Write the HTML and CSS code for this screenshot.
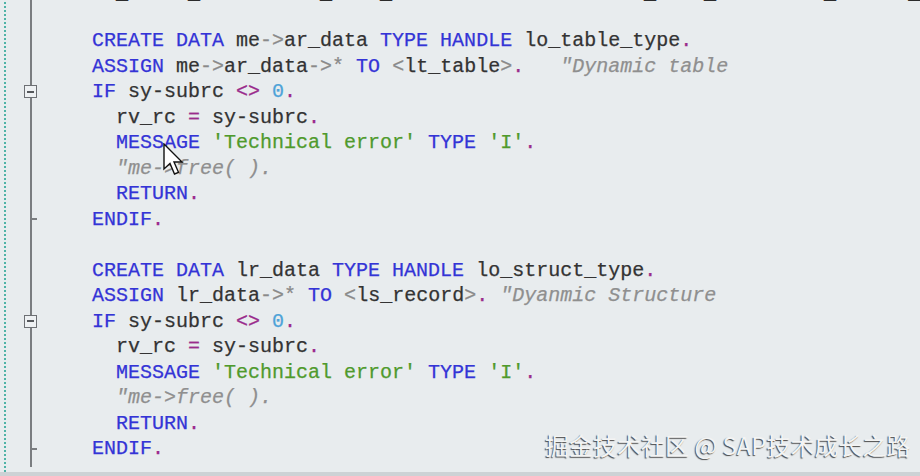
FILE: index.html
```html
<!DOCTYPE html>
<html lang="en">
<head>
<meta charset="utf-8">
<title>ABAP editor</title>
<link rel="stylesheet" href="styles.css">
</head>
<body>
<div class="editor">
  <div class="linenums"></div>
  <div class="folds">
    <div class="frow"></div>
    <div class="frow"></div>
    <div class="frow"></div>
    <div class="frow"></div>
    <div class="frow"><span class="fold-box"><span class="minus"></span></span></div>
    <div class="frow"></div>
    <div class="frow"></div>
    <div class="frow"></div>
    <div class="frow"></div>
    <div class="frow"><span class="tick"></span></div>
    <div class="frow"></div>
    <div class="frow"></div>
    <div class="frow"></div>
    <div class="frow"><span class="fold-box"><span class="minus"></span></span></div>
    <div class="frow"></div>
    <div class="frow"></div>
    <div class="frow"></div>
    <div class="frow"></div>
    <div class="frow"><span class="tick"></span></div>
  </div>
  <div class="code">
    <div class="line under">  _     _          _    _                     _    _         _      _</div>
    <div class="line"> </div>
    <div class="line"><span class="kw">CREATE DATA</span> <span class="id">me</span><span class="op">-&gt;</span><span class="id">ar_data</span> <span class="kw">TYPE HANDLE</span> <span class="id">lo_table_type</span><span class="pt">.</span></div>
    <div class="line"><span class="kw">ASSIGN</span> <span class="id">me</span><span class="op">-&gt;</span><span class="id">ar_data</span><span class="op">-&gt;*</span> <span class="kw">TO</span> <span class="op">&lt;</span><span class="id">lt_table</span><span class="op">&gt;</span><span class="pt">.</span>   <span class="cm">"Dynamic table</span></div>
    <div class="line"><span class="kw">IF</span> <span class="id">sy-subrc</span> <span class="pt">&lt;&gt;</span> <span class="num">0</span><span class="pt">.</span></div>
    <div class="line">  <span class="id">rv_rc</span> <span class="pt">=</span> <span class="id">sy-subrc</span><span class="pt">.</span></div>
    <div class="line">  <span class="kw">MESSAGE</span> <span class="str">'Technical error'</span> <span class="kw">TYPE</span> <span class="str">'I'</span><span class="pt">.</span></div>
    <div class="line">  <span class="cm">"me-&gt;free( ).</span></div>
    <div class="line">  <span class="kw">RETURN</span><span class="pt">.</span></div>
    <div class="line"><span class="kw">ENDIF</span><span class="pt">.</span></div>
    <div class="line"> </div>
    <div class="line"><span class="kw">CREATE DATA</span> <span class="id">lr_data</span> <span class="kw">TYPE HANDLE</span> <span class="id">lo_struct_type</span><span class="pt">.</span></div>
    <div class="line"><span class="kw">ASSIGN</span> <span class="id">lr_data</span><span class="op">-&gt;*</span> <span class="kw">TO</span> <span class="op">&lt;</span><span class="id">ls_record</span><span class="op">&gt;</span><span class="pt">.</span> <span class="cm">"Dyanmic Structure</span></div>
    <div class="line"><span class="kw">IF</span> <span class="id">sy-subrc</span> <span class="pt">&lt;&gt;</span> <span class="num">0</span><span class="pt">.</span></div>
    <div class="line">  <span class="id">rv_rc</span> <span class="pt">=</span> <span class="id">sy-subrc</span><span class="pt">.</span></div>
    <div class="line">  <span class="kw">MESSAGE</span> <span class="str">'Technical error'</span> <span class="kw">TYPE</span> <span class="str">'I'</span><span class="pt">.</span></div>
    <div class="line">  <span class="cm">"me-&gt;free( ).</span></div>
    <div class="line">  <span class="kw">RETURN</span><span class="pt">.</span></div>
    <div class="line"><span class="kw">ENDIF</span><span class="pt">.</span></div>
  </div>
</div>
<div class="statusbar"></div>
<div class="watermark">掘金技术社区 @ SAP技术成长之路</div>
<svg class="cursor" width="22" height="36" viewBox="0 0 22 36" xmlns="http://www.w3.org/2000/svg">
  <path d="M1 1 L1 26 L7 20.5 L11.5 31 L15.5 29.3 L11 19 L19 19 Z" fill="#ffffff" stroke="#111111" stroke-width="1.4" stroke-linejoin="miter"/>
</svg>
</body>
</html>
```
FILE: styles.css
```css
html, body {
  margin: 0;
  padding: 0;
}
body {
  width: 920px;
  height: 476px;
  overflow: hidden;
  background: #e8ecee;
  display: flex;
  flex-direction: column;
  position: relative;
}
.editor {
  margin-top: -23px;
  height: 495px;
  flex: none;
  display: flex;
  overflow: hidden;
}
.linenums {
  width: 4px;
  flex: none;
  border-right: 2px dotted #4fb3a6;
}
.folds {
  width: 38px;
  flex: none;
  background: linear-gradient(#7a7d80, #7a7d80) no-repeat 24px 0 / 2px 490px;
}
.frow {
  height: 25.5px;
  display: flex;
  align-items: center;
}
.fold-box {
  margin-left: 18px;
  width: 11px;
  height: 11px;
  border: 1px solid #6d7074;
  background: #eef1f3;
  display: flex;
  align-items: center;
  justify-content: center;
}
.minus {
  width: 7px;
  height: 2px;
  background: #55585c;
}
.tick {
  margin-left: 25px;
  width: 6px;
  height: 2px;
  background: #7a7d80;
}
.code {
  padding-left: 48px;
  font-family: "Liberation Mono", "DejaVu Sans Mono", monospace;
  font-size: 20px;
  color: #333333;
  -webkit-text-stroke: 0.25px currentColor;
}
.line {
  height: 25.5px;
  line-height: 25.5px;
  white-space: pre;
}
.line.under {
  color: #2b2b2b;
  line-height: 33px;
}
.kw { color: #3434d6; }
.id { color: #333333; }
.op { color: #8a8a8a; }
.pt { color: #9a2b8c; }
.num { color: #4ea3d8; }
.str { color: #4f9a2c; }
.cm { color: #8f8f8f; font-style: italic; }
.statusbar {
  height: 4px;
  flex: none;
  background: #cdd2d5;
}
.watermark {
  position: absolute;
  left: 545px;
  top: 430px;
  font-family: "Noto Sans CJK SC", "Noto Sans", sans-serif;
  font-size: 24px;
  line-height: 30px;
  color: #f3f4f4;
  text-shadow: -1px 1px 1px #4a4a4a;
  white-space: nowrap;
}
.cursor {
  position: absolute;
  left: 163px;
  top: 143px;
}
```
